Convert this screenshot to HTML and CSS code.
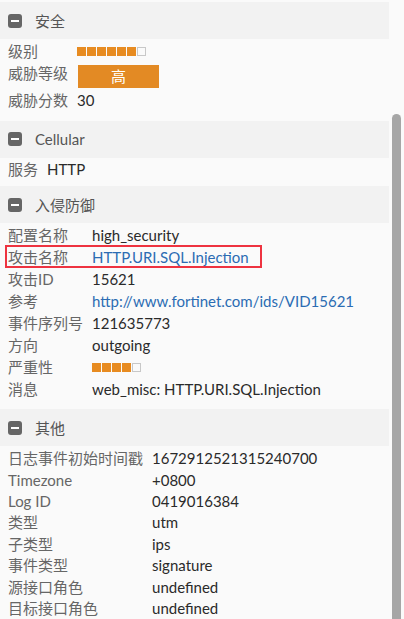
FILE: index.html
```html
<!DOCTYPE html>
<html lang="zh">
<head>
<meta charset="utf-8">
<link rel="stylesheet" href="styles.css">
</head>
<body>
<div class="panel">
  <section class="sec">
    <div class="sec-head"><span class="toggle"></span><span class="sec-title">安全</span></div>
    <div class="rows">
      <div class="lbl">级别</div>
      <div class="val"><span class="meter"><i class="on"></i><i class="on"></i><i class="on"></i><i class="on"></i><i class="on"></i><i class="on"></i><i></i></span></div>
      <div class="lbl">威胁等级</div>
      <div class="val"><span class="badge">高</span></div>
      <div class="lbl">威胁分数</div>
      <div class="val">30</div>
    </div>
  </section>

  <section class="sec sec-tight">
    <div class="sec-head"><span class="toggle"></span><span class="sec-title">Cellular</span></div>
    <div class="rows">
      <div class="lbl">服务</div>
      <div class="val">HTTP</div>
    </div>
  </section>

  <section class="sec sec-ips">
    <div class="sec-head"><span class="toggle"></span><span class="sec-title">入侵防御</span></div>
    <div class="rows">
      <div class="lbl">配置名称</div>
      <div class="val">high_security</div>
      <div class="lbl">攻击名称</div>
      <div class="val link">HTTP.URI.SQL.Injection</div>
      <div class="lbl">攻击ID</div>
      <div class="val">15621</div>
      <div class="lbl">参考</div>
      <div class="val link">http://www.fortinet.com/ids/VID15621</div>
      <div class="lbl">事件序列号</div>
      <div class="val">121635773</div>
      <div class="lbl">方向</div>
      <div class="val">outgoing</div>
      <div class="lbl">严重性</div>
      <div class="val"><span class="meter"><i class="on"></i><i class="on"></i><i class="on"></i><i class="on"></i><i></i></span></div>
      <div class="lbl">消息</div>
      <div class="val">web_misc: HTTP.URI.SQL.Injection</div>
    </div>
  </section>

  <section class="sec sec-other">
    <div class="sec-head"><span class="toggle"></span><span class="sec-title">其他</span></div>
    <div class="rows">
      <div class="lbl">日志事件初始时间戳</div>
      <div class="val">1672912521315240700</div>
      <div class="lbl">Timezone</div>
      <div class="val">+0800</div>
      <div class="lbl">Log ID</div>
      <div class="val">0419016384</div>
      <div class="lbl">类型</div>
      <div class="val">utm</div>
      <div class="lbl">子类型</div>
      <div class="val">ips</div>
      <div class="lbl">事件类型</div>
      <div class="val">signature</div>
      <div class="lbl">源接口角色</div>
      <div class="val">undefined</div>
      <div class="lbl">目标接口角色</div>
      <div class="val">undefined</div>
    </div>
  </section>
</div>
<div class="highlight"></div>
<div class="scrollbar"></div>
</body>
</html>
```

FILE: styles.css
```css
html, body {
  margin: 0;
  padding: 0;
  background: #fafafa;
  overflow: hidden;
}
body {
  width: 404px;
  height: 619px;
  position: relative;
  font-family: Lato, "Noto Sans CJK SC", sans-serif;
  font-size: 15px;
  color: #333;
}
.panel {
  width: 389px;
  padding-top: 2px;
}
.sec {
  margin-bottom: 8px;
}
.sec-tight {
  margin-bottom: 6px;
}
.sec-head {
  height: 37px;
  background: #f2f2f2;
  display: flex;
  align-items: center;
  padding-left: 8px;
  gap: 13px;
}
.toggle {
  width: 14px;
  height: 14px;
  border-radius: 3px;
  background: #666;
  display: flex;
  align-items: center;
  justify-content: center;
}
.toggle::before {
  content: "";
  width: 8px;
  height: 2px;
  background: #fff;
}
.sec-title {
  color: #555;
  font-size: 15px;
}
.rows {
  display: grid;
  grid-template-columns: max-content 1fr;
  column-gap: 9px;
  padding: 2px 0 1px 8px;
  line-height: 21.75px;
}
.sec-tight .rows {
  padding: 1px 0 0 8px;
}
.sec-ips .rows {
  padding: 1px 0 1px 8px;
  line-height: 22px;
}
.sec-other .rows {
  line-height: 21.4px;
}
.lbl {
  color: #666;
}
.val {
  color: #2a2a2a;
  display: flex;
  align-items: center;
}
.link {
  color: #2b6cb3;
}
.meter {
  display: flex;
  gap: 1px;
}
.meter i {
  width: 9px;
  height: 9px;
  box-sizing: border-box;
  background: #e78b21;
}
.meter i:not(.on) {
  background: #fafafa;
  border: 1px solid #c8c8c8;
}
.badge {
  width: 81px;
  height: 23px;
  margin: 2px 0 2px 1px;
  background: #e38a24;
  color: #fff;
  font-size: 15px;
  line-height: 23px;
  text-align: center;
}
.highlight {
  position: absolute;
  left: 5px;
  top: 245px;
  width: 253px;
  height: 19px;
  border: 2px solid #ee3340;
}
.scrollbar {
  position: absolute;
  left: 392px;
  top: 114px;
  width: 9px;
  bottom: 0;
  background: #a6a6a6;
  border-radius: 5px 5px 0 0;
}
```
